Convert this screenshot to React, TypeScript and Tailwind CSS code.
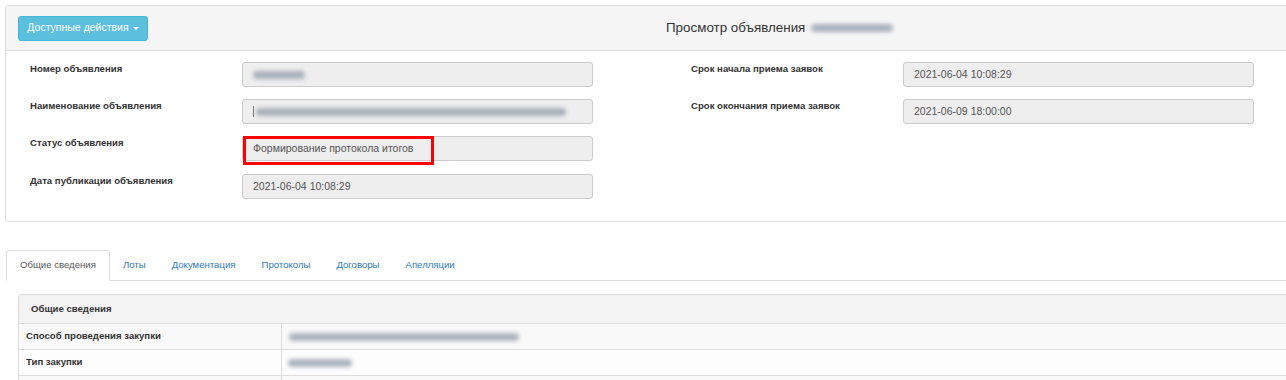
import React from 'react';

const font = { fontFamily: '"Liberation Sans", Arial, sans-serif' };

// blurred placeholder for hidden values
const Smudge: React.FC<{ w: string; className?: string }> = ({ w, className = '' }) => (
    <span className={`inline-block h-[8px] rounded-full bg-gray-400/80 blur-[2px] ${w} ${className}`} />
);

const Field: React.FC<{ label: string; children: React.ReactNode; highlight?: boolean }> = ({
    label,
    children,
    highlight = false,
}) => (
    <div className="flex items-start h-[25px]">
        <div className="w-[212px] shrink-0 text-[9.6px] font-bold text-[#333]">{label}</div>
        <div className="relative w-[351px] h-[25px] flex items-center px-[10px] bg-[#eeeeee] border border-[#cccccc] rounded-[3px] text-[10.5px] text-[#555]">
            {children}
            {highlight && (
                <div className="absolute left-0 -top-[1px] w-[191px] h-[29px] border-[3px] border-[#ff0000]" />
            )}
        </div>
    </div>
);

const tabs = ['Лоты', 'Документация', 'Протоколы', 'Договоры', 'Апелляции'];

export default function App() {
    return (
        <div className="w-[1286px] h-[380px] overflow-hidden bg-white" style={font}>
            {/* top panel */}
            <div className="ml-[5px] mt-[5px] w-[1290px] border border-[#dddddd] rounded-[3px] bg-white">
                <div className="h-[45px] flex items-center bg-[#f5f5f5] border-b border-[#dddddd] pl-[12px]">
                    <button className="h-[25px] w-[130px] flex items-center justify-center gap-[4px] bg-[#5bc0de] border border-[#46b8da] rounded-[3px] text-white text-[10.5px]">
                        Доступные действия
                        <span className="inline-block w-0 h-0 border-l-[3px] border-r-[3px] border-t-[3px] border-l-transparent border-r-transparent border-t-white" />
                    </button>
                    <div className="ml-[518px] flex items-center text-[13.4px] text-[#333]">
                        Просмотр объявления
                        <Smudge w="w-[82px]" className="ml-[6px] bg-gray-300" />
                    </div>
                </div>

                <div className="flex pl-[24px] pt-[11px] pb-[22px]">
                    <div className="flex flex-col gap-[12px] w-[661px]">
                        <Field label="Номер объявления">
                            <Smudge w="w-[52px]" />
                        </Field>
                        <Field label="Наименование объявления">
                            <span className="w-[1px] h-[11px] bg-[#777] mr-[2px]" />
                            <Smudge w="w-[310px]" />
                        </Field>
                        <Field label="Статус объявления" highlight>
                            Формирование протокола итогов
                        </Field>
                        <div className="mt-[1px]">
                            <Field label="Дата публикации объявления">2021-06-04 10:08:29</Field>
                        </div>
                    </div>
                    <div className="flex flex-col gap-[12px]">
                        <Field label="Срок начала приема заявок">2021-06-04 10:08:29</Field>
                        <Field label="Срок окончания приема заявок">2021-06-09 18:00:00</Field>
                    </div>
                </div>
            </div>

            {/* tabs */}
            <div className="mt-[28px] ml-[6px] flex items-end h-[31px] border-b border-[#dddddd]">
                <div className="h-[31px] px-[13px] flex items-center bg-white border border-[#dddddd] border-b-white -mb-[1px] rounded-t-[4px] text-[9.6px] text-[#555]">
                    Общие сведения
                </div>
                <div className="flex items-center h-[30px] text-[9.6px] text-[#337ab7]">
                    {tabs.map((t) => (
                        <span key={t} className="px-[13px]">
                            {t}
                        </span>
                    ))}
                </div>
            </div>

            {/* inner panel */}
            <div className="mt-[13px] ml-[18px] w-[1280px] border-l border-t border-[#dddddd] rounded-tl-[3px]">
                <div className="h-[29px] flex items-center pl-[12px] bg-[#f3f3f3] border-b border-[#dddddd] text-[9.6px] font-bold text-[#333]">
                    Общие сведения
                </div>
                <div className="flex h-[26px] bg-[#f9f9f9] border-b border-[#dddddd]">
                    <div className="w-[263px] flex items-center pl-[7px] border-r border-[#dddddd] text-[9.6px] font-bold text-[#333]">
                        Способ проведения закупки
                    </div>
                    <div className="flex items-center pl-[7px]">
                        <Smudge w="w-[230px]" className="bg-gray-300" />
                    </div>
                </div>
                <div className="flex h-[26px] bg-[#fdfdfd] border-b border-[#dddddd]">
                    <div className="w-[263px] flex items-center pl-[7px] border-r border-[#dddddd] text-[9.6px] font-bold text-[#333]">
                        Тип закупки
                    </div>
                    <div className="flex items-center pl-[6px]">
                        <Smudge w="w-[64px]" className="bg-gray-300" />
                    </div>
                </div>
                <div className="flex h-[26px] bg-[#f9f9f9]">
                    <div className="w-[263px] border-r border-[#dddddd]" />
                </div>
            </div>
        </div>
    );
}
